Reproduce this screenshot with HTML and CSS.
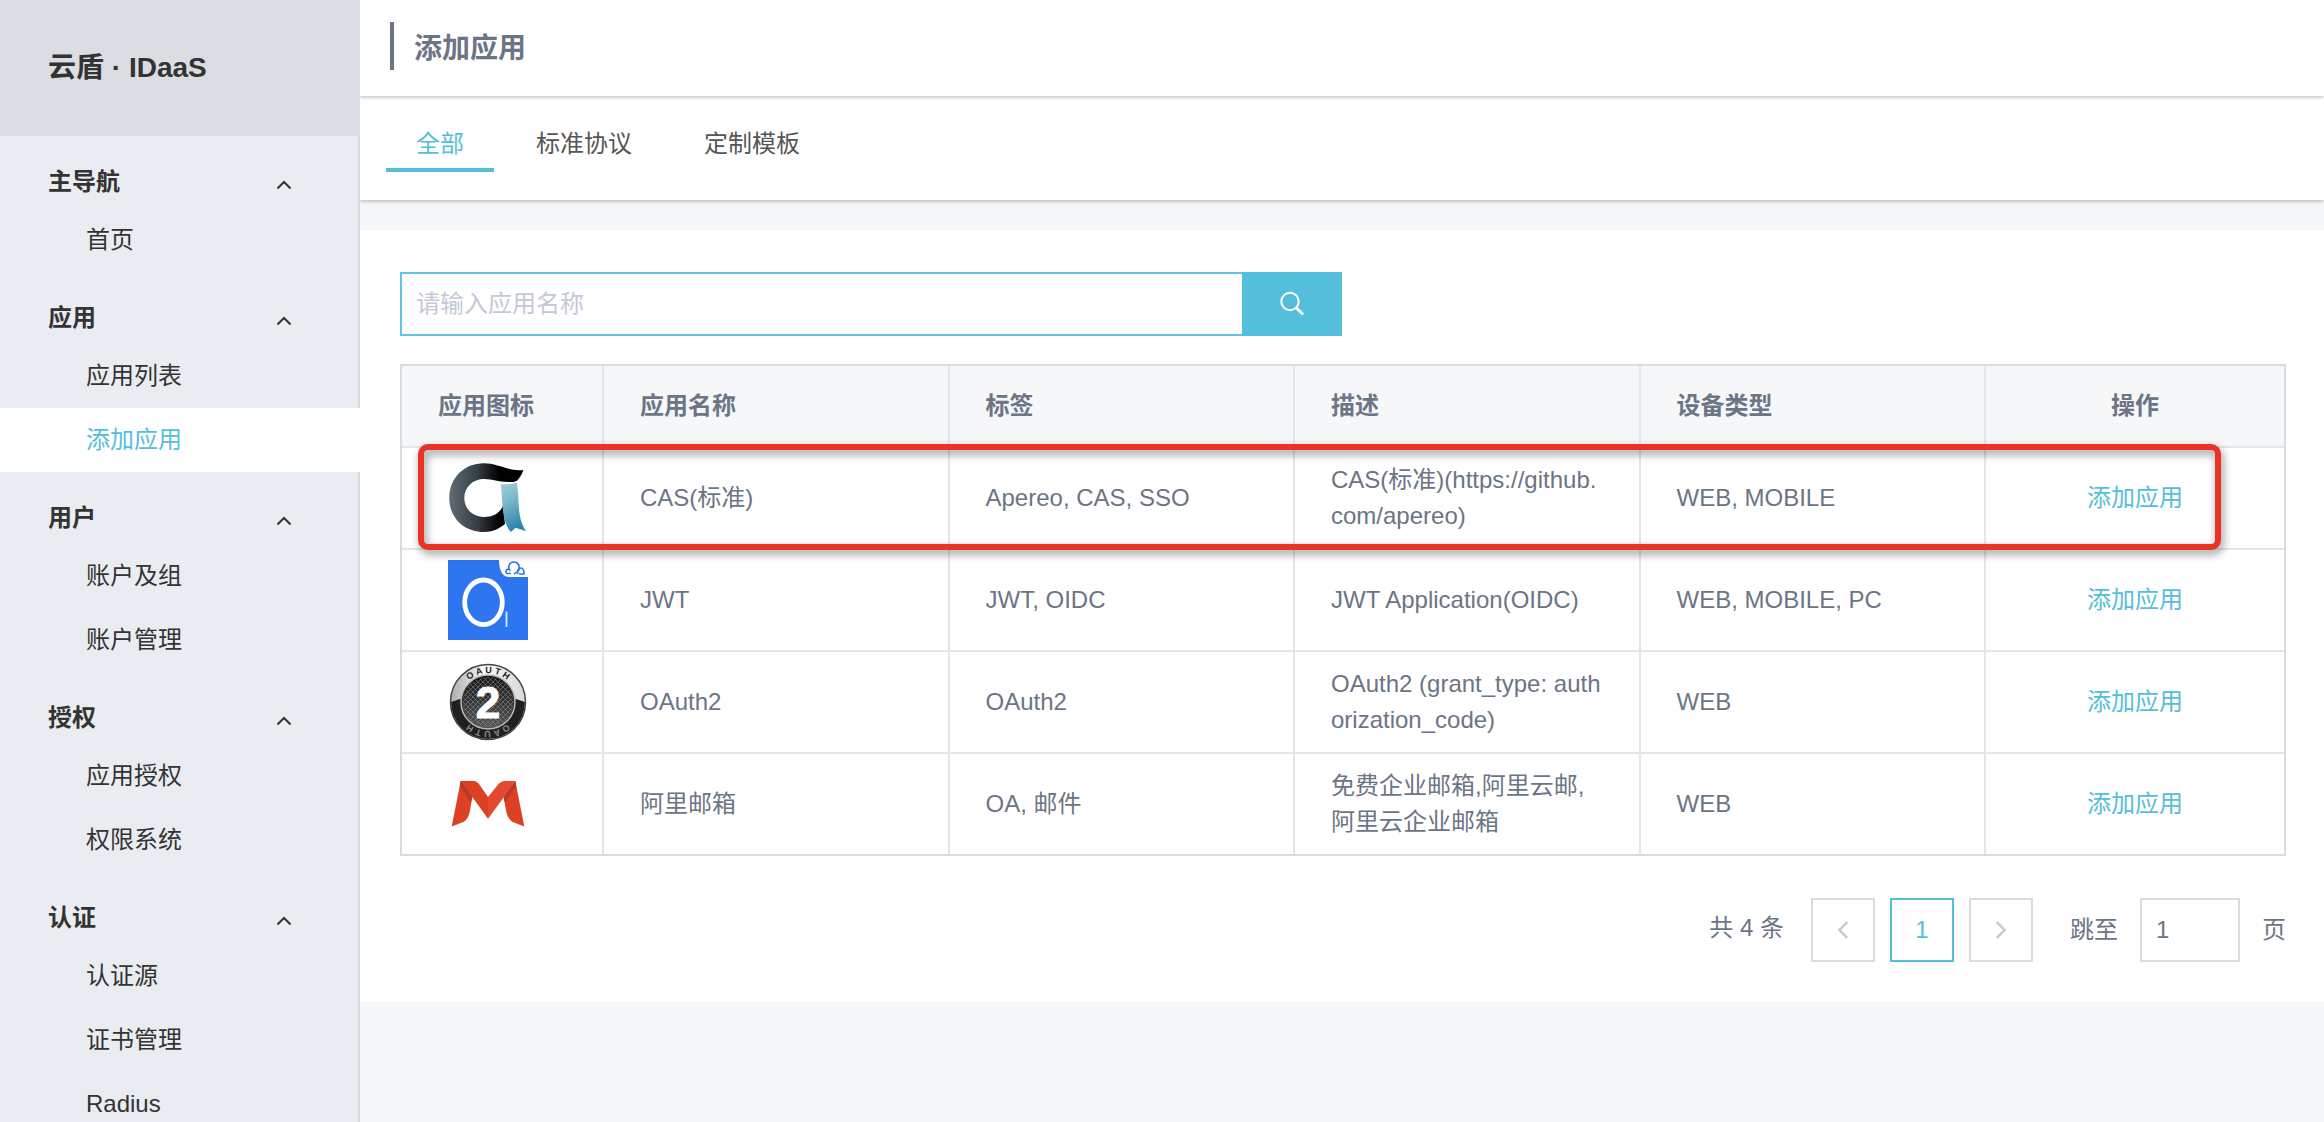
FILE: index.html
```html
<!DOCTYPE html>
<html lang="zh-CN">
<head>
<meta charset="utf-8">
<meta name="viewport" content="width=device-width, initial-scale=1">
<title>添加应用 - 云盾 IDaaS</title>
<link rel="stylesheet" href="styles.css">
</head>
<body>
<svg class="sprite" width="0" height="0" aria-hidden="true">
  <symbol id="chevron" viewBox="0 0 16 10"><path d="M1.500 8.500 8 2l6.500 6.500" fill="none" stroke="currentColor" stroke-width="2"/></symbol>
</svg>
<div class="layout">
  <aside class="sidebar">
    <div class="brand">云盾 · IDaaS</div>
    <nav class="nav">
      <section class="group">
        <button class="group-title" type="button">主导航<svg class="caret"><use href="#chevron"/></svg></button>
        <a class="item" href="#">首页</a>
      </section>
      <section class="group">
        <button class="group-title" type="button">应用<svg class="caret"><use href="#chevron"/></svg></button>
        <a class="item" href="#">应用列表</a>
        <a class="item active" href="#">添加应用</a>
      </section>
      <section class="group">
        <button class="group-title" type="button">用户<svg class="caret"><use href="#chevron"/></svg></button>
        <a class="item" href="#">账户及组</a>
        <a class="item" href="#">账户管理</a>
      </section>
      <section class="group">
        <button class="group-title" type="button">授权<svg class="caret"><use href="#chevron"/></svg></button>
        <a class="item" href="#">应用授权</a>
        <a class="item" href="#">权限系统</a>
      </section>
      <section class="group">
        <button class="group-title" type="button">认证<svg class="caret"><use href="#chevron"/></svg></button>
        <a class="item" href="#">认证源</a>
        <a class="item" href="#">证书管理</a>
        <a class="item" href="#">Radius</a>
      </section>
    </nav>
  </aside>

  <main class="main">
    <header class="page-head"><h1 class="page-title">添加应用</h1></header>
    <div class="tabs">
      <a class="tab current" href="#">全部</a>
      <a class="tab" href="#">标准协议</a>
      <a class="tab" href="#">定制模板</a>
    </div>

    <div class="panel">
      <form class="search">
        <input class="search-input" type="text" aria-label="应用名称" placeholder="请输入应用名称">
        <button class="search-button" type="button" aria-label="搜索">
          <svg width="26" height="26" viewBox="0 0 26 26" fill="none" stroke="currentColor"><circle cx="11" cy="10.500" r="8.700" stroke-width="2"/><path d="m17 16.500 7 7" stroke-width="3"/></svg>
        </button>
      </form>

      <div class="table-wrap">
        <table class="apps">
          <colgroup><col class="col-icon"><col><col><col><col><col class="col-action"></colgroup>
          <thead>
            <tr><th>应用图标</th><th>应用名称</th><th>标签</th><th>描述</th><th>设备类型</th><th>操作</th></tr>
          </thead>
          <tbody>
            <tr>
              <td>
                <svg class="logo" viewBox="0 0 80 80" aria-hidden="true">
                  <defs>
                    <linearGradient id="ring"><stop offset="0" stop-color="#626b71"/><stop offset=".38" stop-color="#343e45"/><stop offset=".68" stop-color="#000"/></linearGradient>
                    <linearGradient id="ribbon" x1="0" y1="0" x2=".3" y2="1"><stop offset="0" stop-color="#a3d0d8"/><stop offset=".4" stop-color="#7dbaca"/><stop offset="1" stop-color="#2f86ad"/></linearGradient>
                  </defs>
                  <path fill="url(#ring)" d="M36 5.300C16 5.300 1.300 20 1.300 40S16 74 36 74c8 0 15-3 21-8l-2-18c-3 7-10 11-19 11-11 0-19.700-8-19.700-19S25 21 36 21c9 0 14 3 24 3 4 0 7 0 9-1.300 3-3 5-6.700 6.300-10.700C62 14 50 5.300 36 5.300z"/>
                  <path fill="url(#ribbon)" d="M52.700 26.300c5 0 11 0 16-1.600C72 40 68 58 78 73.300l-10.300-3.600-5 4.300C53 62 55 42 52.700 26.300z"/>
                </svg>
              </td>
              <td>CAS(标准)</td><td>Apereo, CAS, SSO</td><td>CAS(标准)(https://github.com/apereo)</td><td>WEB, MOBILE</td><td><a href="#">添加应用</a></td>
            </tr>
            <tr>
              <td>
                <svg class="logo" viewBox="0 0 80 80" fill="none" aria-hidden="true">
                  <path fill="#2d76f0" d="M0 0h80v80H0z"/>
                  <path fill="#fff" d="M51 0h29v17H61C55 17 51 11 51 0z"/>
                  <ellipse cx="35.500" cy="42.300" rx="18.800" ry="22.300" stroke="#fff" stroke-width="4.800"/>
                  <path stroke="#dce9fd" stroke-width="1.800" d="M58.500 51.500V67"/>
                  <path stroke="#2d76f0" stroke-width="1.600" d="M63 13.500h-3c-3 0-3-4.500 1-4.500M62 11c-3-5 0-9 4-9s6 4 5 8c-1 2-3 3-5 4M70 14c-1-3 0-6 3-6s3 3 3 6h-5"/>
                </svg>
              </td>
              <td>JWT</td><td>JWT, OIDC</td><td>JWT Application(OIDC)</td><td>WEB, MOBILE, PC</td><td><a href="#">添加应用</a></td>
            </tr>
            <tr>
              <td>
                <svg class="logo" viewBox="0 0 80 80" aria-hidden="true">
                  <defs>
                    <linearGradient id="silver"><stop offset="0" stop-color="#aaa"/><stop offset=".45" stop-color="#f8f8f8"/><stop offset="1" stop-color="#d8d8d8"/></linearGradient>
                    <linearGradient id="core" x1="0" y1="0" x2="0" y2="1"><stop offset="0" stop-color="#151515"/><stop offset="1" stop-color="#555"/></linearGradient>
                    <pattern id="mesh" width="5" height="5" patternUnits="userSpaceOnUse"><path d="m0 0 5 5M5 0 0 5" stroke="#999" stroke-width=".5"/></pattern>
                    <path id="arc-top" d="M11 40a29 29 0 0 1 58 0"/>
                    <path id="arc-bottom" d="M69 40a29 29 0 0 1-58 0"/>
                  </defs>
                  <circle cx="40" cy="40" r="38" fill="url(#silver)"/>
                  <path d="M3 40l12-4 50 0 12 4a37 37 0 0 1-74 0z" fill="#202020"/>
                  <circle cx="40" cy="40" r="37.500" fill="none" stroke="#444" stroke-width="1.500"/>
                  <circle cx="40" cy="40" r="27" fill="url(#core)" stroke="#bbb" stroke-width="1.500"/>
                  <circle cx="40" cy="40" r="25" fill="url(#mesh)"/>
                  <text class="seal" fill="#222"><textPath href="#arc-top" startOffset="50%">O A U T H</textPath></text>
                  <text class="seal" fill="#888"><textPath href="#arc-bottom" startOffset="50%">O A U T H</textPath></text>
                  <text class="seal-number" x="40" y="56">2</text>
                </svg>
              </td>
              <td>OAuth2</td><td>OAuth2</td><td>OAuth2 (grant_type: authorization_code)</td><td>WEB</td><td><a href="#">添加应用</a></td>
            </tr>
            <tr>
              <td>
                <svg class="logo" viewBox="0 0 80 80" aria-hidden="true">
                  <path fill="#dd4124" d="M12.700 17H26q3 0 5 3l9 13v21.700L24.300 33C22 45 22 55 15.300 58L3.700 62.500z"/>
                  <path fill="#e2492f" d="M40 33 51 19.500q2.500-2.500 5-2.500h11.300L56 33 40 54.700z"/>
                  <path fill="#dd4124" d="M67.300 17 76.300 62.500 64.700 58C58 54 58 45 55.700 33z"/>
                  <path fill="#bd3722" d="m12.700 17 11.600 16-1.500 5L11.700 22zM67.300 17 55.700 33l1 5.500L68.300 22z"/>
                </svg>
              </td>
              <td>阿里邮箱</td><td>OA, 邮件</td><td>免费企业邮箱,阿里云邮,阿里云企业邮箱</td><td>WEB</td><td><a href="#">添加应用</a></td>
            </tr>
          </tbody>
        </table>
        <div class="highlight"></div>
      </div>

      <div class="pager">
        <span class="total">共 4 条</span>
        <div class="pages">
          <button class="page" type="button" aria-label="上一页" disabled><svg class="arrow prev"><use href="#chevron"/></svg></button>
          <button class="page on" type="button">1</button>
          <button class="page" type="button" aria-label="下一页" disabled><svg class="arrow next"><use href="#chevron"/></svg></button>
        </div>
        <label class="jump">跳至<input class="jump-input" type="text" value="1">页</label>
      </div>
    </div>
  </main>
</div>
</body>
</html>
```
FILE: styles.css
```css
* { box-sizing: border-box; }
body {
  margin: 0;
  background: #f5f7f9;
  color: #6b7585;
  font: 24px/36px "Liberation Sans", "Noto Sans CJK SC", sans-serif;
}
a { color: #55bedb; text-decoration: none; }
button, input { font: inherit; color: inherit; border-radius: 0; }
.sprite { position: absolute; }

.layout { display: flex; height: 100vh; }

.sidebar {
  width: 360px;
  flex: none;
  overflow-y: auto;
  scrollbar-width: none;
  background: linear-gradient(to left, #d7dbe1 2px, #e9edf2 2px);
  color: #333;
}
.brand {
  height: 136px;
  padding-left: 48px;
  background: #dadde2;
  font-size: 28px;
  line-height: 136px;
  font-weight: 700;
}
.group { padding-top: 20px; }
.group-title {
  display: flex;
  align-items: center;
  justify-content: space-between;
  width: 100%;
  height: 52px;
  padding: 0 68px 0 48px;
  border: 0;
  background: none;
  font-weight: 700;
}
.caret { width: 16px; height: 10px; margin-top: 6px; }
.item {
  display: block;
  height: 64px;
  padding-left: 86px;
  color: #333;
  line-height: 64px;
}
.item.active { background: #fff; color: #55bedb; }

.main { flex: 1; min-width: 0; overflow-y: auto; scrollbar-width: none; }
.page-head {
  position: relative;
  display: flex;
  height: 96px;
  padding: 22px 30px;
  background: #fff;
  box-shadow: 0 1px 4px rgba(0, 0, 0, .3);
}
.page-title {
  height: 48px;
  margin: 0;
  padding-left: 20px;
  border-left: 4px solid #6b7585;
  font-size: 28px;
  line-height: 54px;
  font-weight: 700;
}
.tabs {
  display: flex;
  gap: 12px;
  height: 104px;
  padding: 20px 26px 28px;
  background: #fff;
  box-shadow: 0 1px 4px rgba(0, 0, 0, .3);
}
.tab {
  padding: 0 30px;
  border-bottom: 4px solid transparent;
  color: #555;
  line-height: 56px;
}
.tab.current { border-color: #55bedb; color: #55bedb; }

.panel { margin-top: 30px; padding: 42px 38px 40px 40px; background: #fff; }

.search { display: flex; max-width: 942px; height: 64px; margin-bottom: 28px; }
.search-input {
  flex: 1;
  min-width: 0;
  padding: 0 14px;
  border: 2px solid #62c5df;
  border-right: 0;
  background: #fff;
  outline: 0;
}
.search-input::placeholder { color: #c3cad6; opacity: 1; }
.search-button {
  display: grid;
  place-items: center;
  width: 100px;
  padding: 0;
  border: 0;
  background: #55bedb;
  color: #fff;
}

.table-wrap { position: relative; }
.apps {
  width: 100%;
  table-layout: fixed;
  border: 2px solid #d7dce2;
  border-spacing: 0;
}
.col-icon { width: 202px; }
.col-action { width: 298px; }
.apps th, .apps td {
  padding: 0 36px;
  border: solid #e3e7eb;
  border-width: 0 2px 2px 0;
  text-align: left;
  word-break: break-all;
}
.apps th { height: 82px; background: #f5f7f9; font-weight: 700; }
.apps td { height: 102px; }
.apps th:last-child, .apps td:last-child { border-right: 0; text-align: center; }
.apps tbody tr:last-child td { height: 100px; border-bottom: 0; }
.logo { display: block; width: 80px; height: 80px; margin-left: 10px; }
.seal { font-size: 9px; font-weight: 700; text-anchor: middle; }
.seal-number { fill: #fff; stroke: #fff; stroke-width: 1px; font-size: 44px; font-weight: 700; text-anchor: middle; }

.highlight {
  position: absolute;
  top: 80px;
  left: 18px;
  right: 65px;
  height: 106px;
  border: 6px solid #ea3323;
  border-radius: 10px;
  filter: drop-shadow(2px 4px 4px rgba(0, 0, 0, .45));
  pointer-events: none;
}

.pager { display: flex; justify-content: flex-end; align-items: center; margin-top: 42px; }
.total { padding-bottom: 4px; }
.pages { display: flex; gap: 15px; margin: 0 37px 0 27px; }
.page {
  display: grid;
  place-items: center;
  width: 64px;
  height: 64px;
  padding: 0;
  border: 2px solid #d7dce2;
  background: #fff;
}
.page.on { border-color: #55bedb; color: #55bedb; }
.arrow { width: 20px; height: 12px; color: #c8c8c8; }
.prev { transform: rotate(-90deg); }
.next { transform: rotate(90deg); }
.jump { display: flex; align-items: center; gap: 22px; }
.jump-input {
  width: 100px;
  height: 64px;
  padding: 0 14px;
  border: 2px solid #d7dce2;
  background: #fff;
}
```
